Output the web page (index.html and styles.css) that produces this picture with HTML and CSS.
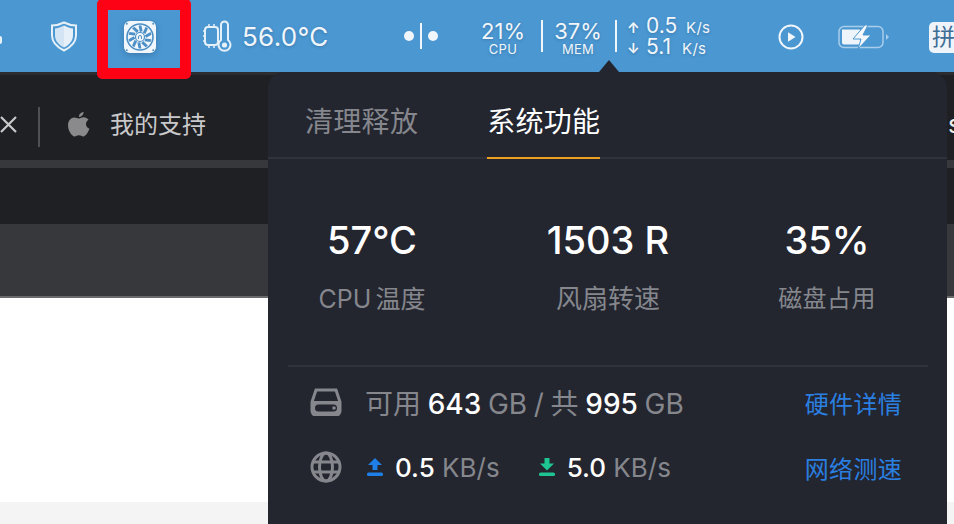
FILE: index.html
```html
<!DOCTYPE html>
<html lang="zh-CN">
<head>
  <meta charset="UTF-8" />
  <title>系统功能</title>
  <link rel="stylesheet" href="styles.css">
</head>
<body>

<div class="menubar">
  <span class="cut-icon"></span>
  <svg class="shield" viewBox="0 0 28 32"><path d="M14 2 C18 4 23 5 26 5 V15 C26 23 20 27 14 30 C8 27 2 23 2 15 V5 C5 5 10 4 14 2Z" fill="none" stroke="#e6f0f9" stroke-width="2"/><path d="M14 5 C18 7 21 8 23 8 V15 C23 21 18 25 14 27Z" fill="#e6f0f9"/><path d="M14 5 C10 7 7 8 5 8 V15 C5 21 10 25 14 27Z" fill="#e6f0f9" opacity=".88"/></svg>
  <svg class="fan" viewBox="0 0 32 32">
    <rect width="32" height="32" rx="6" fill="#f1f6fb"/>
    <circle cx="16" cy="16" r="13" fill="none" stroke="#4b8fc6" stroke-width="1.6"/>
    <g fill="#4b8fc6">
      <path d="M14.600 4.500h2.800l1.200 5.800-2.800 .6Z"/>
      <path transform="rotate(36 16 16)" d="M14.600 4.500h2.800l1.200 5.800-2.800 .6Z"/>
      <path transform="rotate(72 16 16)" d="M14.600 4.500h2.800l1.200 5.800-2.800 .6Z"/>
      <path transform="rotate(108 16 16)" d="M14.600 4.500h2.800l1.200 5.800-2.800 .6Z"/>
      <path transform="rotate(144 16 16)" d="M14.600 4.500h2.800l1.200 5.800-2.800 .6Z"/>
      <path transform="rotate(180 16 16)" d="M14.600 4.500h2.800l1.200 5.800-2.800 .6Z"/>
      <path transform="rotate(216 16 16)" d="M14.600 4.500h2.800l1.200 5.800-2.800 .6Z"/>
      <path transform="rotate(252 16 16)" d="M14.600 4.500h2.800l1.200 5.800-2.800 .6Z"/>
      <path transform="rotate(288 16 16)" d="M14.600 4.500h2.800l1.200 5.800-2.800 .6Z"/>
      <path transform="rotate(324 16 16)" d="M14.600 4.500h2.800l1.200 5.800-2.800 .6Z"/>
      <circle cx="2.800" cy="2.800" r="1"/><circle cx="29.200" cy="2.800" r="1"/><circle cx="2.800" cy="29.200" r="1"/><circle cx="29.200" cy="29.200" r="1"/>
    </g>
    <circle cx="16" cy="16" r="4.500" fill="none" stroke="#4b8fc6" stroke-width="1.200"/>
    <path d="M14.500 18v-2a1.500 1.500 0 0 1 3 0v2" fill="none" stroke="#4b8fc6" stroke-width="1"/>
  </svg>
  <svg class="thermal" viewBox="0 0 30 32" fill="none" stroke="#e6f0f9" stroke-width="2">
    <rect x="3" y="7" width="13" height="18" rx="3"/>
    <path d="M1 11h2M1 16h2M1 21h2M7 4v3M12 4v3M7 25v3M12 25v3" stroke-width="1.500"/>
    <path d="M19 20V5a3.500 3.500 0 0 1 7 0v15a6 6 0 1 1-7 0Z" fill="#4b97d1"/>
    <circle cx="22.500" cy="25" r="2.600" fill="#e6f0f9" stroke="none"/>
  </svg>
  <span class="temp">56.0°C</span>
  <span class="dots"><i></i><b></b><i></i></span>
  <div class="meter meter-cpu"><strong>21%</strong><small>CPU</small></div>
  <span class="sep"></span>
  <div class="meter meter-mem"><strong>37%</strong><small>MEM</small></div>
  <span class="sep"></span>
  <div class="speeds">
    <div class="speed"><em>↑</em><strong>0.5</strong><small>K/s</small></div>
    <div class="speed"><em>↓</em><strong>5.1</strong><small>K/s</small></div>
  </div>
  <svg class="play" viewBox="0 0 26 26"><circle cx="13" cy="13" r="11.500" fill="none" stroke="#f1f6fb" stroke-width="2"/><path d="M10 8.200v9.600l7.600-4.800Z" fill="#f1f6fb"/></svg>
  <svg class="battery" viewBox="0 0 52 24">
    <rect x="1" y="1.500" width="44" height="21" rx="5" fill="none" stroke="#a9cdea" stroke-width="1.500"/>
    <path d="M48 9l3 3-3 3Z" fill="#a9cdea"/>
    <path d="M4 4.500h18v15H6a2 2 0 0 1-2-2Z" fill="#edf4fa"/>
    <path d="M27 0 15 14h8l-3 10 13-14h-8l5-10Z" fill="#f4f8fc" stroke="#4b97d1"/>
  </svg>
  <span class="ime">拼</span>
</div>

<div class="site-tabs">
  <svg class="close" viewBox="0 0 17 17"><path d="M1 1l15 15M16 1L1 16" stroke="#c9c9cb" stroke-width="2.200"/></svg>
  <span class="tab-sep"></span>
  <svg class="apple" viewBox="0 0 22 26"><path fill="#8a8a8c" d="M15.600 0c.2 2-1.800 5-4.600 4.900C10.700 2.500 13 .3 15.600 0ZM11 6.400c1.300 0 2.700-1.200 4.800-1.200 1.800 0 3.600.9 4.700 2.500-3.800 2.300-3.100 7.600.9 9.100-1.100 3-3.500 7.600-6 7.600-1.800 0-2.300-1.100-4.400-1.100s-2.800 1.100-4.400 1.100C3.700 24.400 0 18.300 0 13.500c0-5 3.100-8 6.300-8 1.900 0 3.400 1 4.700.9Z"/></svg>
  <span class="tab-name">我的支持</span>
  <span class="tab-edge">s</span>
</div>
<div class="strip-thin"></div>
<div class="strip-dark"></div>
<div class="strip-grey"></div>
<div class="page-white"></div>

<div class="red-mark"></div>

<div class="popover">
  <span class="caret"></span>
  <nav class="pop-tabs">
    <span class="pop-tab">清理释放</span>
    <span class="pop-tab active">系统功能</span>
  </nav>
  <div class="stats">
    <div class="stat"><strong>57°C</strong><span class="stat-cpu">CPU 温度</span></div>
    <div class="stat"><strong>1503 R</strong><span>风扇转速</span></div>
    <div class="stat"><strong>35%</strong><span class="stat-small">磁盘占用</span></div>
  </div>
  <div class="info-row disk-row">
    <svg class="row-icon" viewBox="0 0 32 28"><path d="M6 2h20l4 12v9a4 4 0 0 1-4 4H6a4 4 0 0 1-4-4v-9Z" fill="none" stroke="#85878d" stroke-width="3"/><path d="M2 13h28v10a4 4 0 0 1-4 4H6a4 4 0 0 1-4-4Z" fill="#85878d"/><rect x="5" y="16.500" width="22" height="7" rx="3.500" fill="#23252f"/><circle cx="24" cy="20" r="1.800" fill="#85878d"/></svg>
    <p class="row-text">可用 <b>643</b> GB / 共 <b>995</b> GB</p>
    <a class="row-link">硬件详情</a>
  </div>
  <div class="info-row net-row">
    <svg class="row-icon" viewBox="0 0 32 32" fill="none" stroke="#85878d" stroke-width="3"><circle cx="16" cy="16" r="14"/><ellipse cx="16" cy="16" rx="6.500" ry="14"/><path d="M3 11h26M3 21h26"/></svg>
    <svg class="net-arrow" viewBox="0 0 18 20"><path d="M9 1l7 7h-4.500v5h-5V8H2Z" fill="#1f7fe8"/><rect x="1" y="15.500" width="16" height="3.500" rx="1.500" fill="#1f7fe8"/></svg>
    <p class="row-text"><b>0.5</b> KB/s</p>
    <svg class="net-arrow arrow-down" viewBox="0 0 18 20"><path d="M9 13.500l7-7h-4.500V1h-5v5.500H2Z" fill="#1ec592"/><rect x="1" y="15.500" width="16" height="3.500" rx="1.500" fill="#1ec592"/></svg>
    <p class="row-text"><b>5.0</b> KB/s</p>
    <a class="row-link">网络测速</a>
  </div>
</div>

</body>
</html>
```

FILE: styles.css
```css
* {
  box-sizing: border-box;
  margin: 0;
  padding: 0;
}

html, body {
  width: 954px;
  height: 524px;
  overflow: hidden;
}

body {
  position: relative;
  background: #f4f4f5;
  font-family: Inter, "Noto Sans CJK SC", sans-serif;
}

/* menu bar */
.menubar {
  height: 72px;
  background: #4b97d1;
  display: flex;
  align-items: center;
  color: #f1f6fb;
  text-shadow: 0 1px 3px rgba(30, 70, 110, 0.35);
  overflow: hidden;
  white-space: nowrap;
}

.menubar > * {
  flex-shrink: 0;
}

.cut-icon {
  width: 2px;
  height: 8px;
  margin-top: 8px;
  border-radius: 0 2px 2px 0;
  background: #e6f0f9;
}

.shield { width: 28px; height: 33px; margin-left: 48px; }
.fan { width: 32px; height: 32px; margin-left: 46px; margin-top: 2px; filter: drop-shadow(0 2px 3px rgba(30, 70, 110, 0.35)); }
.thermal { width: 30px; height: 32px; margin-left: 46px; }

.temp {
  margin-left: 10px;
  width: 87px;
  font-size: 26px;
  letter-spacing: 0.3px;
}

.dots {
  margin-left: 75px;
  width: 34px;
  display: flex;
  align-items: center;
  justify-content: space-between;
}

.dots i {
  width: 10px;
  height: 10px;
  border-radius: 50%;
  background: #f1f6fb;
}

.dots b {
  width: 2px;
  height: 26px;
  background: #f1f6fb;
}

.meter {
  display: flex;
  flex-direction: column;
  align-items: center;
  margin-top: 4px;
}

.meter strong {
  font-weight: 400;
  font-size: 22px;
  line-height: 22px;
}

.meter small {
  font-size: 13px;
  line-height: 14px;
  letter-spacing: 0.3px;
}

.meter-cpu { margin-left: 43px; width: 44px; }
.meter-mem { margin-left: 12px; width: 46px; }

.sep {
  width: 2px;
  height: 32px;
  margin-left: 16px;
  background: #f1f6fb;
}

.meter-mem + .sep { margin-left: 14px; }

.speeds {
  margin-left: 12px;
  width: 84px;
}

.speed {
  display: flex;
  align-items: baseline;
  height: 21px;
  line-height: 21px;
}

.speed em {
  font-style: normal;
  font-size: 14px;
  width: 19px;
  margin-left: -2px;
  font-weight: 700;
}

.speed strong {
  font-weight: 400;
  font-size: 21px;
  width: 33px;
}

.speed small {
  font-size: 15px;
  margin-left: 7px;
  letter-spacing: 0.3px;
}

.speed + .speed small { margin-left: 3px; }

.play { width: 26px; height: 26px; margin-left: 65px; margin-top: 2px; }
.battery { width: 52px; height: 24px; margin-left: 34px; margin-top: 2px; }

.ime {
  margin-left: 39px;
  width: 40px;
  height: 31px;
  margin-top: 2px;
  padding-left: 3px;
  border-radius: 5px;
  background: #eef4fa;
  color: #3f6d96;
  font-size: 23px;
  line-height: 31px;
  text-shadow: none;
}

/* browser page behind the popover */
.site-tabs {
  height: 88px;
  padding-top: 10px;
  background: #1f2023;
  border-top: 3px solid #2b2c2f;
  display: flex;
  align-items: center;
  color: #c9c9cb;
}

.close {
  width: 17px;
  height: 17px;
  margin-top: 4px;
  flex-shrink: 0;
}

.tab-sep {
  width: 2px;
  height: 40px;
  margin-left: 21px;
  margin-top: 8px;
  background: #4f5053;
}

.apple { width: 22px; height: 26px; margin-left: 28px; margin-top: 4px; }

.tab-name {
  margin-left: 20px;
  font-size: 24px;
}

.tab-edge {
  margin-left: auto;
  margin-top: 3px;
  width: 6px;
  font-size: 25px;
  color: #eee;
  overflow: hidden;
}

.strip-thin { height: 8px; background: #37383b; }
.strip-dark { height: 56px; background: #1f2023; }
.strip-grey { height: 74px; background: #37383b; border-bottom: 2px solid #6a6a6c; }
.page-white { height: 204px; background: #fff; }

.red-mark {
  position: absolute;
  left: 97px;
  top: -1px;
  width: 94px;
  height: 80px;
  border: 11px solid #fc0214;
  border-radius: 5px;
}

/* popover */
.popover {
  position: absolute;
  left: 268px;
  top: 72px;
  width: 679px;
  height: 460px;
  border-radius: 16px 16px 0 0;
  background: #23252f;
}

.caret {
  position: absolute;
  left: 331px;
  top: -12px;
  border-left: 10px solid transparent;
  border-right: 10px solid transparent;
  border-bottom: 12px solid #23252f;
}

.pop-tabs {
  height: 87px;
  display: flex;
  gap: 69px;
  padding-left: 37px;
  border-bottom: 2px solid #2f313b;
}

.pop-tab {
  height: 87px;
  font-size: 28px;
  letter-spacing: 0.3px;
  line-height: 100px;
  color: #85878d;
}

.pop-tab.active {
  color: #fff;
  border-bottom: 2px solid #f0a020;
}

.stats {
  display: grid;
  grid-template-columns: 208px 264px 174px;
  height: 206px;
  margin: 0 20px 0 0;
  padding-top: 59px;
}

.stat {
  display: flex;
  flex-direction: column;
  align-items: center;
}

.stat strong {
  font-weight: 500;
  font-size: 38px;
  line-height: 45px;
  color: #fff;
}

.stat span {
  margin-top: 18px;
  font-size: 26px;
  line-height: 36px;
  color: #85878d;
}

.stat .stat-cpu {
  font-size: 25px;
  word-spacing: -3px;
}

.stat .stat-small {
  margin-top: 18px;
  font-size: 24px;
  letter-spacing: 0.4px;
}

.info-row {
  display: flex;
  align-items: center;
  margin: 0 19px 0 20px;
  padding: 0 26px 0 22px;
  color: #85878d;
}

.disk-row {
  height: 78px;
  padding-bottom: 6px;
  border-top: 2px solid #2f313b;
}

.net-row { height: 48px; }

.row-icon { width: 32px; height: 32px; flex-shrink: 0; }
.disk-row .row-icon { height: 28px; }

.row-text {
  font-size: 28px;
  word-spacing: -1.2px;
  white-space: nowrap;
}

.row-text b {
  font-weight: 500;
  color: #fff;
}

.disk-row .row-text { margin-left: 23px; }
.net-row .row-text { margin-left: 11px; font-size: 26px; word-spacing: 0; }

.net-arrow { width: 18px; height: 20px; margin-left: 24px; }
.arrow-down { margin-left: 38px; }

.row-link {
  margin-left: auto;
  font-size: 24px;
  letter-spacing: 0.3px;
  color: #2a7fe0;
}
```
